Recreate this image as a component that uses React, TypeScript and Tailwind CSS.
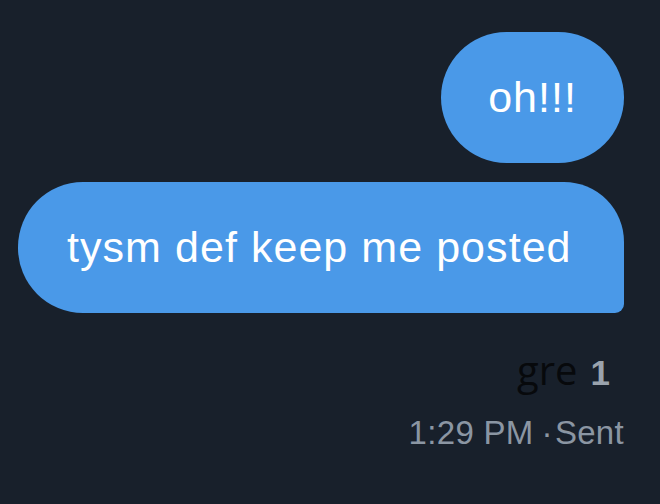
import React from "react";

export default function App() {
  return (
    <div
      className="w-[660px] h-[504px] bg-[#18202b] flex flex-col items-end pr-[36px] pt-[32px] overflow-hidden"
      style={{ fontFamily: '"Liberation Sans", Arial, sans-serif' }}
    >
      <div className="h-[131px] w-[183px] rounded-full bg-[#4a99e8] flex items-center justify-center">
        <span className="text-white text-[43px] leading-none tracking-[1px]">oh!!!</span>
      </div>
      <div className="mt-[19px] h-[131px] w-[606px] bg-[#4a99e8] rounded-l-[65px] rounded-tr-[60px] rounded-br-[9px] flex items-center pl-[49px]">
        <span className="text-white text-[43px] leading-none tracking-[1.05px]">tysm def keep me posted</span>
      </div>
      <div className="mt-[37px] flex items-baseline pr-[14px] h-[48px]">
        <span
          className="text-[#07090c] text-[40px] font-medium leading-none"
          style={{ fontFamily: '"Open Sans", "Noto Sans", sans-serif' }}
        >
          gre
        </span>
        <span className="ml-[13px] text-[#9aa3ad] text-[35px] font-semibold leading-none">1</span>
      </div>
      <div className="mt-[18px] flex items-baseline text-[#8b96a3] text-[33px] leading-none tracking-[0.3px]">
        <span>1:29 PM</span>
        <span className="ml-[8px]">·</span>
        <span className="ml-[2px]">Sent</span>
      </div>
    </div>
  );
}
